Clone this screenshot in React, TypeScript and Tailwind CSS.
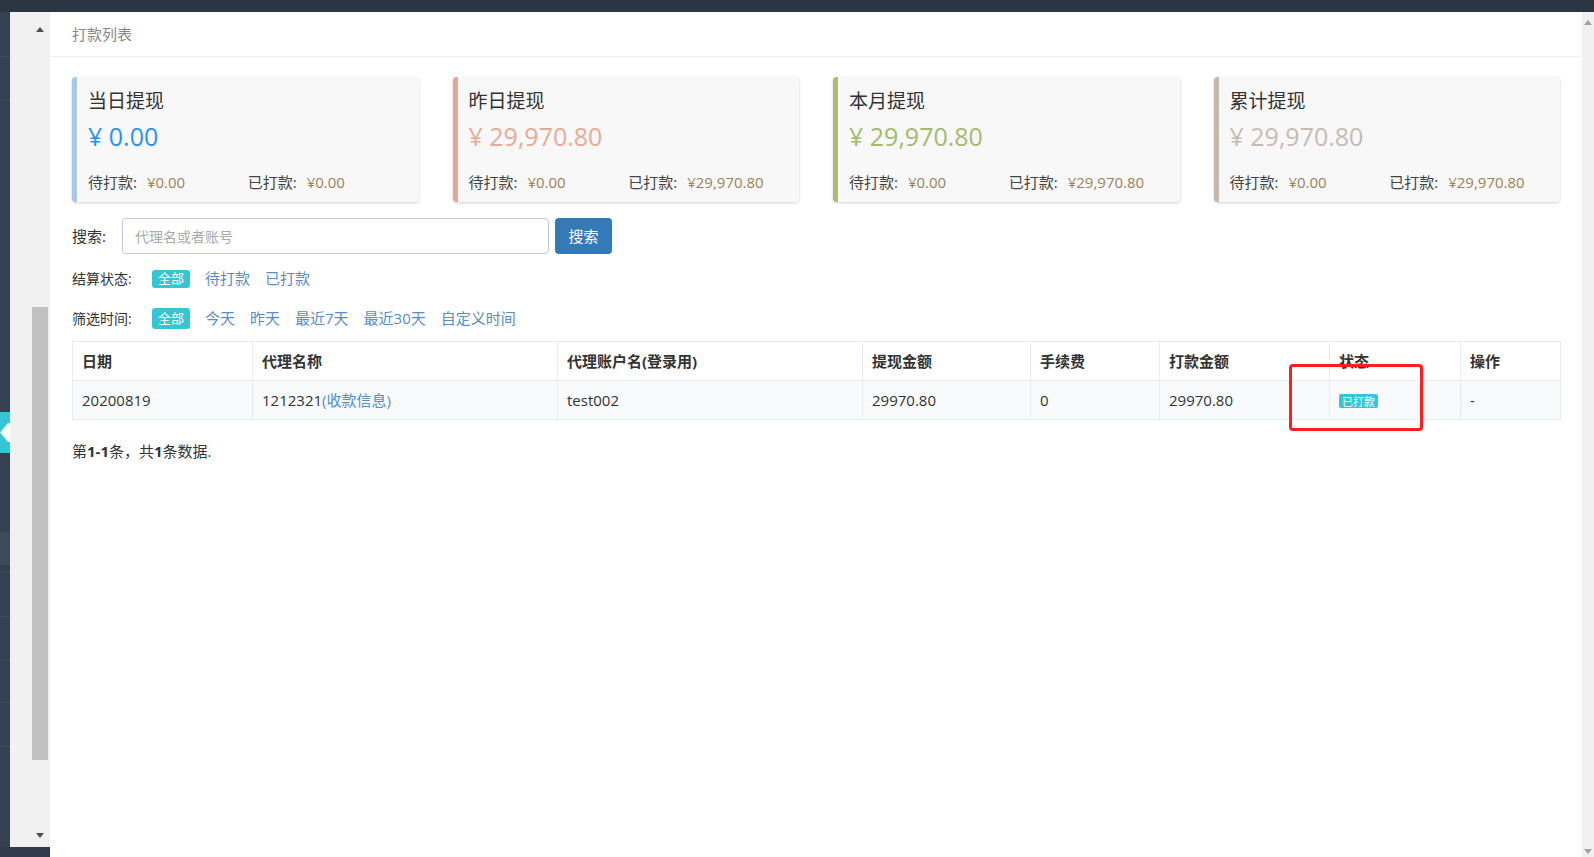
import React from "react";

// Withdrawal list page: summary cards, filters, table.

const CARDS = [
  { title: "当日提现", amount: "¥ 0.00", pending: "¥0.00", paid: "¥0.00", bar: "border-[#a9c7e6]", text: "text-[#2a92f0]" },
  { title: "昨日提现", amount: "¥ 29,970.80", pending: "¥0.00", paid: "¥29,970.80", bar: "border-[#e5a793]", text: "text-[#e8aa94]" },
  { title: "本月提现", amount: "¥ 29,970.80", pending: "¥0.00", paid: "¥29,970.80", bar: "border-[#a8be70]", text: "text-[#a2bb6c]" },
  { title: "累计提现", amount: "¥ 29,970.80", pending: "¥0.00", paid: "¥29,970.80", bar: "border-[#c5b7ac]", text: "text-[#c8bbb1]" },
];

const COLS = [
  { label: "日期", w: "w-[180px]" },
  { label: "代理名称", w: "w-[305px]" },
  { label: "代理账户名(登录用)", w: "w-[305px]" },
  { label: "提现金额", w: "w-[168px]" },
  { label: "手续费", w: "w-[129px]" },
  { label: "打款金额", w: "w-[170px]" },
  { label: "状态", w: "w-[131px]" },
  { label: "操作", w: "w-[100px]" },
];

function Sidebar() {
  return (
    <div className="flex w-[10px] flex-col bg-[#364150]">
      <div className="h-[45px] border-b border-[#3f4b5b]" />
      <div className="h-[43px] border-b border-[#3f4b5b]" />
      <div className="h-[312px]" />
      <div className="flex h-[41px] items-center bg-[#36c6d3]">
        <svg width="10" height="41" viewBox="0 0 10 41">
          <path d="M0 20.5 L8 11 L10 11 L10 30 L8 30 Z" fill="#fff" />
        </svg>
      </div>
      <div className="h-[79px]" />
      <div className="h-[33px] bg-[#3e4a5b]" />
      <div className="h-[8px] border-b border-[#3f4b5b]" />
      <div className="h-[44px] border-b border-[#3f4b5b]" />
      <div className="h-[43px] border-b border-[#3f4b5b]" />
      <div className="h-[43px] border-b border-[#3f4b5b]" />
      <div className="h-[44px] border-b border-[#3f4b5b]" />
      <div className="flex-1" />
    </div>
  );
}

function LeftTrack() {
  return (
    <div className="flex w-[40px] flex-col bg-[#f1f1f1]">
      <div className="flex h-[20px] items-end justify-end pr-[6px]">
        <svg width="8" height="5" viewBox="0 0 8 5">
          <path d="M0 5 L4 0 L8 5 Z" fill="#505050" />
        </svg>
      </div>
      <div className="h-[275px]" />
      <div className="ml-[22px] h-[453px] w-[16px] bg-[#c1c1c1]" />
      <div className="flex-1" />
      <div className="flex h-[14px] items-start justify-end pr-[6px]">
        <svg width="8" height="5" viewBox="0 0 8 5">
          <path d="M0 0 L8 0 L4 5 Z" fill="#505050" />
        </svg>
      </div>
    </div>
  );
}

function StatCard({ c }: { c: (typeof CARDS)[number] }) {
  return (
    <div className={`h-[125px] rounded-[4px] border-l-[5px] ${c.bar} bg-[#f8f8f8] pl-[11px] pt-[12px] shadow-[0_1px_3px_rgba(0,0,0,0.18)]`}>
      <div className="text-[19px] leading-[24px] text-[#333]">{c.title}</div>
      <div className={`mt-[7px] text-[25px] leading-[32px] ${c.text}`}>{c.amount}</div>
      <div className="mt-[20px] grid grid-cols-2 pr-[11px] text-[15px] leading-[20px]">
        <div>
          <span className="text-[#444]">待打款:</span>
          <span className="ml-[10px] text-[#9f8157]">{c.pending}</span>
        </div>
        <div>
          <span className="text-[#444]">已打款:</span>
          <span className="ml-[10px] text-[#9f8157]">{c.paid}</span>
        </div>
      </div>
    </div>
  );
}

function FilterRow({ label, items, badgeH }: { label: string; items: string[]; badgeH: string }) {
  return (
    <div className="flex h-[21px] items-center">
      <span className="w-[80px] text-[14px] text-[#333]">{label}</span>
      <span className={`flex ${badgeH} w-[38px] items-center justify-center rounded-[3px] bg-[#36c6d3] text-[13px] text-white`}>
        全部
      </span>
      {items.map((t) => (
        <span key={t} className="ml-[15px] text-[15px] text-[#5b8bc9]">
          {t}
        </span>
      ))}
    </div>
  );
}

export default function App() {
  return (
    <div className="flex h-[857px] w-full flex-col overflow-hidden bg-white font-['Open_Sans','Noto_Sans_CJK_SC',sans-serif]">
      <div className="h-[12px] shrink-0 bg-[#2b3643]" />
      <div className="flex min-h-0 flex-1">
        <div className="flex w-[50px] flex-col">
          <div className="flex min-h-0 flex-1">
            <Sidebar />
            <LeftTrack />
          </div>
          <div className="h-[10px] bg-[#2f3a4a]" />
        </div>

        <main className="flex min-w-0 flex-1 flex-col bg-white">
          <div className="flex h-[45px] shrink-0 items-center rounded-br-[4px] border-b border-[#eceff3] px-[22px] text-[15px] text-[#888]">
            打款列表
          </div>

          <div className="px-[22px] pt-[20px]">
            <div className="grid grid-cols-4 gap-[34px]">
              {CARDS.map((c) => (
                <StatCard key={c.title} c={c} />
              ))}
            </div>

            <div className="mt-[16px] flex h-[36px] items-center">
              <span className="w-[50px] text-[15px] text-[#333]">搜索:</span>
              <div className="flex h-[36px] w-[427px] items-center rounded-[4px] border border-[#c2cad8] px-[12px] text-[14px] text-[#aaa]">
                代理名或者账号
              </div>
              <button className="ml-[6px] flex h-[36px] w-[57px] items-center justify-center rounded-[4px] bg-[#337ab7] text-[15px] text-white">
                搜索
              </button>
            </div>

            <div className="mt-[14px]">
              <FilterRow label="结算状态:" items={["待打款", "已打款"]} badgeH="h-[18px]" />
            </div>
            <div className="mt-[19px]">
              <FilterRow label="筛选时间:" items={["今天", "昨天", "最近7天", "最近30天", "自定义时间"]} badgeH="h-[21px]" />
            </div>

            <div className="relative mt-[12px]">
              <table className="w-[1488px] table-fixed border-collapse text-[15px] text-[#333]">
                <thead>
                  <tr className="h-[39px]">
                    {COLS.map((c) => (
                      <th key={c.label} className={`${c.w} border border-[#e7ecf1] px-[9px] text-left font-bold`}>
                        {c.label}
                      </th>
                    ))}
                  </tr>
                </thead>
                <tbody>
                  <tr className="h-[39px] bg-[#f9fafc]">
                    <td className="border border-[#e7ecf1] px-[9px]">20200819</td>
                    <td className="border border-[#e7ecf1] px-[9px]">
                      1212321<span className="text-[#5b8bc9]">(收款信息)</span>
                    </td>
                    <td className="border border-[#e7ecf1] px-[9px]">test002</td>
                    <td className="border border-[#e7ecf1] px-[9px]">29970.80</td>
                    <td className="border border-[#e7ecf1] px-[9px]">0</td>
                    <td className="border border-[#e7ecf1] px-[9px]">29970.80</td>
                    <td className="border border-[#e7ecf1] px-[9px]">
                      <span className="inline-flex h-[14px] items-center rounded-[2px] bg-[#36c6d3] px-[3px] text-[11px] leading-none text-white">
                        已打款
                      </span>
                    </td>
                    <td className="border border-[#e7ecf1] px-[9px]">-</td>
                  </tr>
                </tbody>
              </table>
              <div className="pointer-events-none absolute left-[1217px] top-[23px] h-[67px] w-[134px] rounded-[4px] border-[3px] border-[#ff1f1f]" />
            </div>

            <div className="mt-[21px] text-[15px] leading-[20px] text-[#333]">
              第<b>1-1</b>条，共<b>1</b>条数据.
            </div>
          </div>
        </main>

        <div className="flex w-[12px] flex-col justify-between bg-[#f0f0f0]">
          <div className="flex justify-center pt-[8px]">
            <svg width="8" height="5" viewBox="0 0 8 5">
              <path d="M0 5 L4 0 L8 5 Z" fill="#a3a3a3" />
            </svg>
          </div>
          <div className="flex justify-center pb-[3px]">
            <svg width="8" height="5" viewBox="0 0 8 5">
              <path d="M0 0 L8 0 L4 5 Z" fill="#a3a3a3" />
            </svg>
          </div>
        </div>
      </div>
    </div>
  );
}
